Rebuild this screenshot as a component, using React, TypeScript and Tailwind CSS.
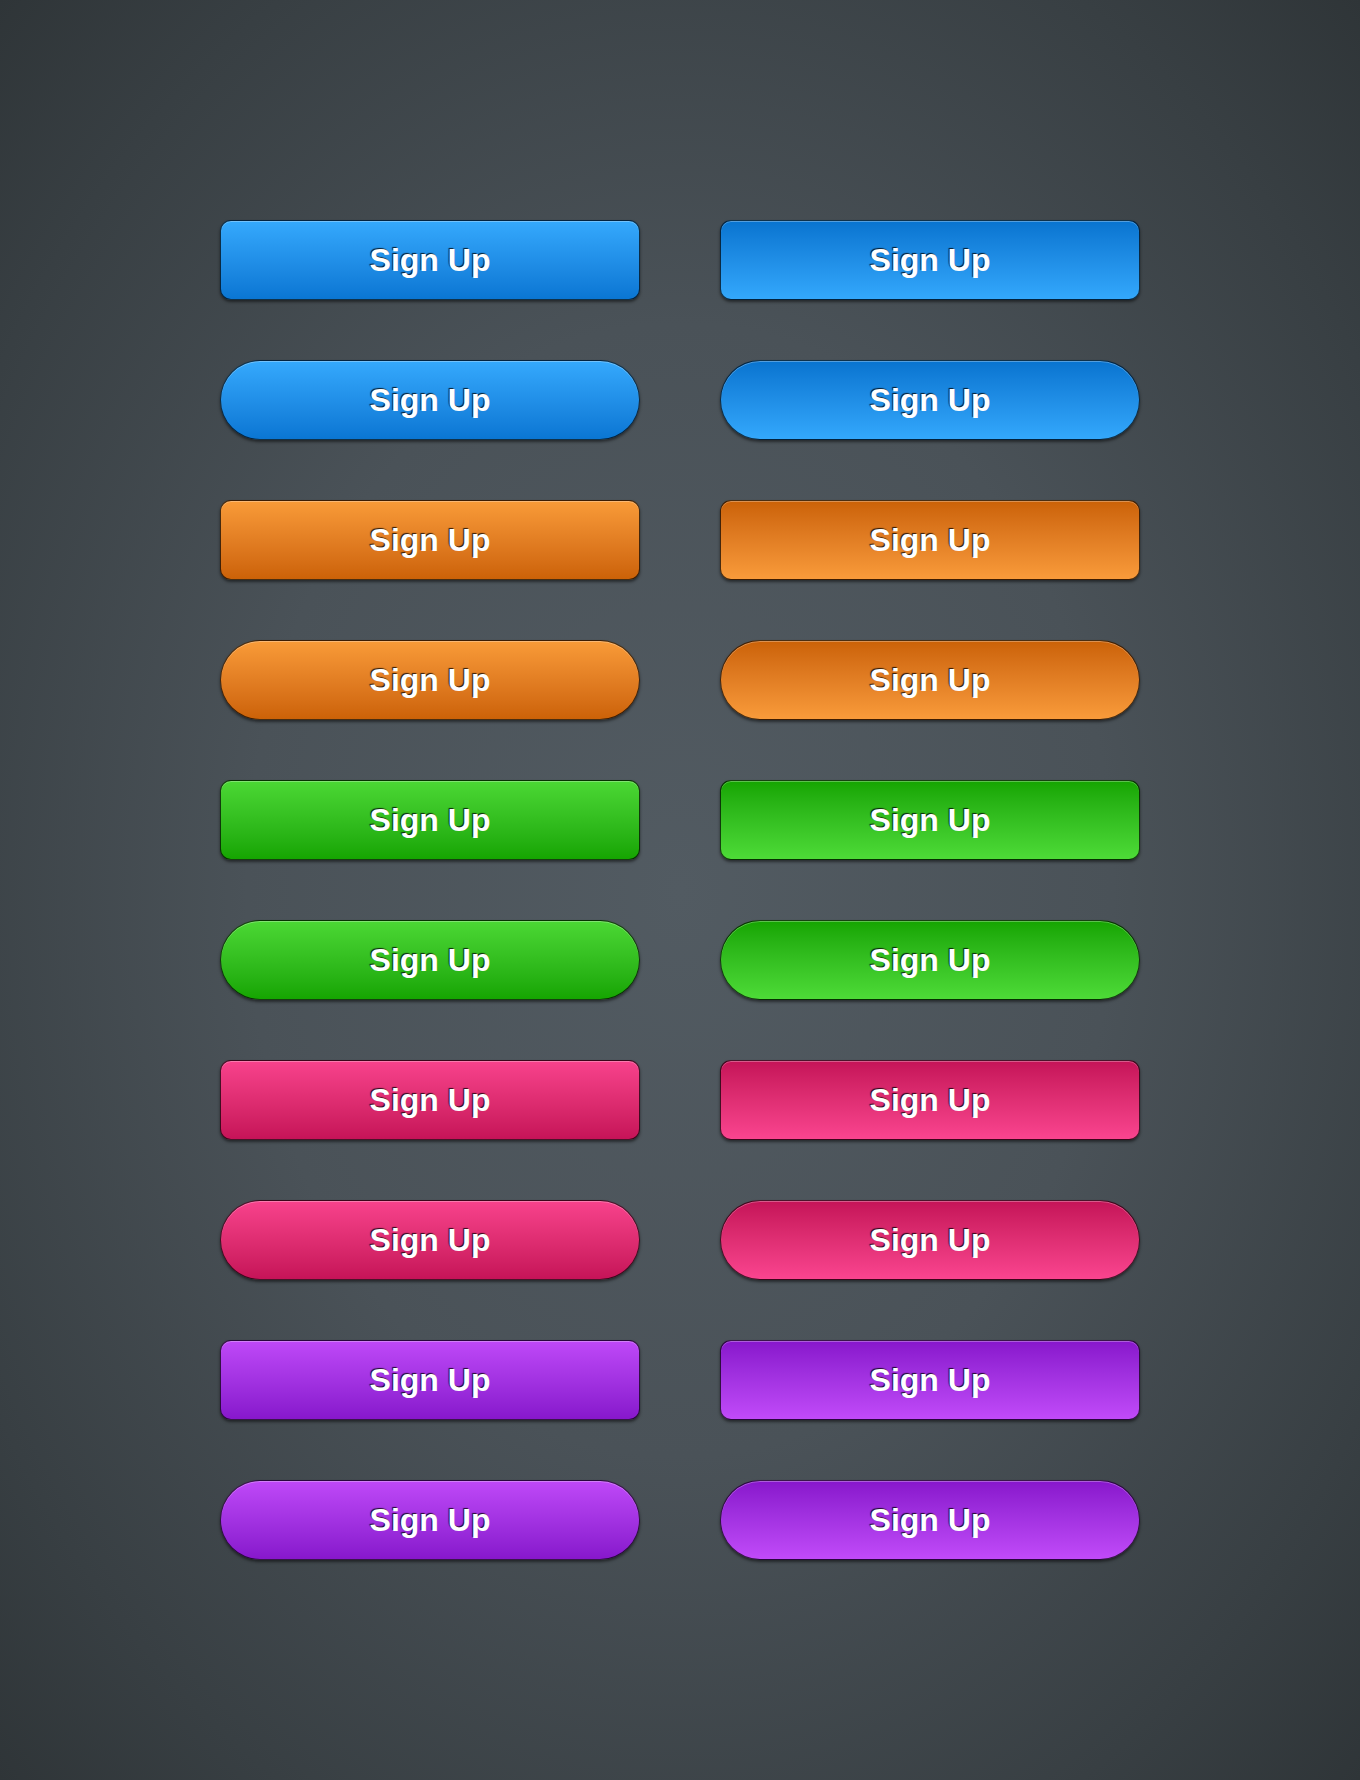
import React from 'react'

type Tone = {
  name: string
  down: string // light on top
  up: string // dark on top
}

// each colour: left column light→dark, right column dark→light
const tones: Tone[] = [
  {
    name: 'blue',
    down: 'bg-linear-to-b from-[#35a9fd] to-[#0a76d3]',
    up: 'bg-linear-to-b from-[#0874d0] to-[#33a8fc]',
  },
  {
    name: 'orange',
    down: 'bg-linear-to-b from-[#f99b38] to-[#cc6207]',
    up: 'bg-linear-to-b from-[#cb6206] to-[#f99b3a]',
  },
  {
    name: 'green',
    down: 'bg-linear-to-b from-[#4bd834] to-[#15a501]',
    up: 'bg-linear-to-b from-[#15a500] to-[#4ddb37]',
  },
  {
    name: 'pink',
    down: 'bg-linear-to-b from-[#f8428c] to-[#c61358]',
    up: 'bg-linear-to-b from-[#c51358] to-[#fa448f]',
  },
  {
    name: 'purple',
    down: 'bg-linear-to-b from-[#bf48f8] to-[#8717cc]',
    up: 'bg-linear-to-b from-[#8816cc] to-[#c14af9]',
  },
]

function SignUp({ fill, pill }: { fill: string; pill?: boolean }) {
  return (
    <button
      type="button"
      className={
        'flex h-[80px] w-[420px] items-center justify-center border border-[rgba(0,0,0,0.7)] text-[32px] font-bold text-white shadow-[inset_0_1px_0_rgba(255,255,255,0.3),0_2px_3px_rgba(0,0,0,0.5)] [text-shadow:-1px_-1px_1px_rgba(0,0,0,0.8)] ' +
        (pill ? 'rounded-full ' : 'rounded-[11px] ') +
        fill
      }
      style={{ fontFamily: '"Liberation Sans", Arial, sans-serif' }}
    >
      Sign Up
    </button>
  )
}

export default function App() {
  return (
    <div className="min-h-[1780px] w-full bg-[radial-gradient(ellipse_at_50%_50%,#525b62_0%,#4a5258_45%,#383f43_82%,#2f3538_100%)] pt-[220px]">
      <div className="mx-auto grid w-[920px] grid-cols-2 gap-x-[80px] gap-y-[60px]">
        {tones.map((t) => (
          <React.Fragment key={t.name}>
            <SignUp fill={t.down} />
            <SignUp fill={t.up} />
            <SignUp fill={t.down} pill />
            <SignUp fill={t.up} pill />
          </React.Fragment>
        ))}
      </div>
    </div>
  )
}
